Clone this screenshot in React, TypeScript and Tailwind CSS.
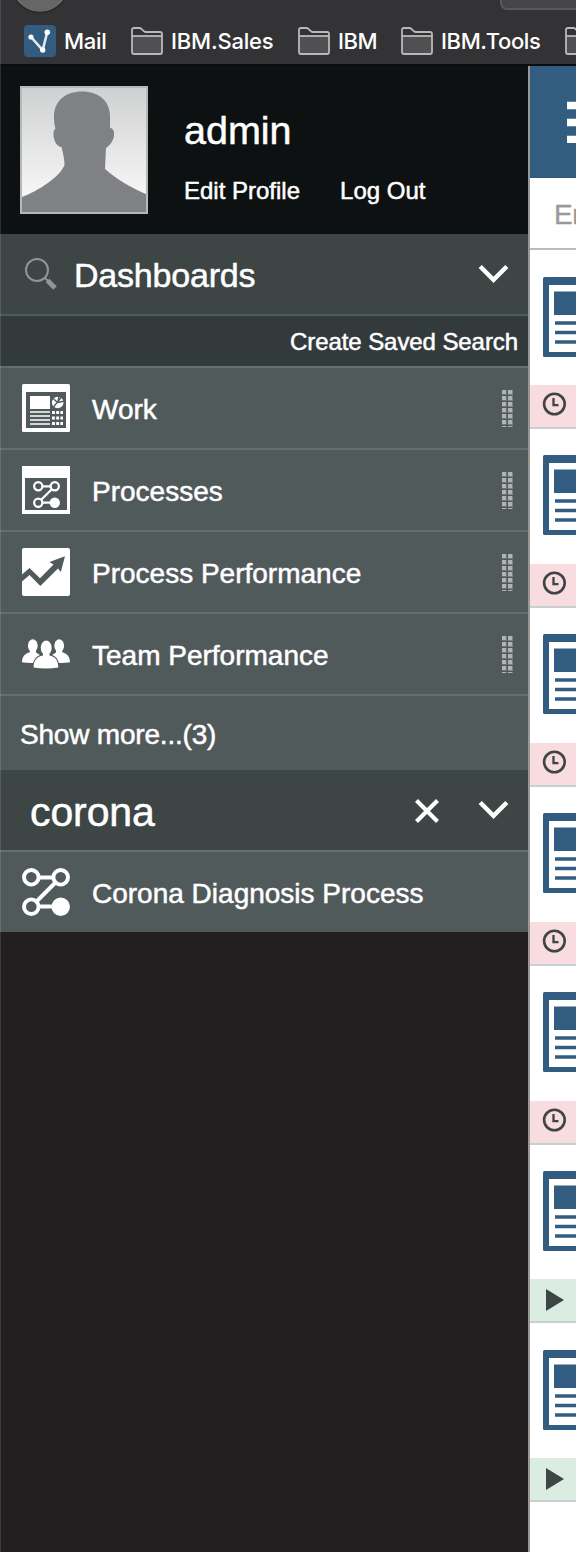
import type { ReactNode } from "react";

function Folder() {
  return (
    <svg className="h-[28px] w-[32px] shrink-0" viewBox="0 0 32 28" fill="none" stroke="#b9b9ba" strokeWidth="1.8">
      <path d="M1 9H31V25Q31 27 29 27H3Q1 27 1 25Z" fill="#505052" stroke="none" />
      <path d="M1 3Q1 1 3 1H8.5Q9.6 1 10.4 1.8L13 4.3Q13.8 5 15 5H29Q31 5 31 7V25Q31 27 29 27H3Q1 27 1 25Z" />
      <path d="M1 9H31" />
    </svg>
  );
}

function BrowserBar() {
  return (
    <header className="flex h-[66px] shrink-0 flex-col overflow-hidden border-b-2 border-[#0b0c0d] bg-[#333335] font-['Inter',sans-serif] text-[22px] font-medium text-white">
      <div className="flex h-[17px] shrink-0 items-end justify-between pl-[10px]">
        <svg className="h-[17px] w-[60px]" viewBox="0 0 60 17">
          <circle cx="30" cy="-17" r="29.5" fill="#666667" stroke="#272729" strokeWidth="1.5" />
        </svg>
        <div className="mb-[7px] h-[10px] w-[76px] rounded-bl-[7px] border-b-2 border-l-2 border-[#58585b] bg-[#454547]" />
      </div>
      <nav className="flex h-[47px] shrink-0 items-center pl-[24px] leading-[30px] whitespace-nowrap">
        <div className="flex w-[107px] shrink-0 items-center gap-[8px]">
          <svg className="h-[32px] w-[32px] shrink-0" viewBox="0 0 32 32">
            <rect width="32" height="32" rx="4" fill="#325c80" />
            <path d="M7 12L18.7 25L23.3 7" fill="none" stroke="#e3eaf0" strokeWidth="2.6" />
            <circle cx="7" cy="12" r="2.6" fill="#fff" />
            <circle cx="18.7" cy="25" r="2.7" fill="#fff" />
            <circle cx="23.3" cy="7.2" r="2.8" fill="#fff" />
          </svg>
          <span className="tracking-[-0.3px]">Mail</span>
        </div>
        <div className="flex w-[167px] shrink-0 items-center gap-[8px]">
          <Folder />
          <span className="tracking-[-0.2px]">IBM.Sales</span>
        </div>
        <div className="flex w-[103px] shrink-0 items-center gap-[8px]">
          <Folder />
          <span className="tracking-[-0.5px]">IBM</span>
        </div>
        <div className="flex w-[164px] shrink-0 items-center gap-[8px]">
          <Folder />
          <span className="tracking-[-0.4px]">IBM.Tools</span>
        </div>
        <Folder />
      </nav>
    </header>
  );
}

function Avatar() {
  return (
    <svg className="h-[128px] w-[128px] shrink-0" viewBox="0 0 128 128">
      <defs>
        <linearGradient id="sky" x1="0" y1="0" x2="0" y2="1">
          <stop offset="0" stopColor="#cfd0d1" />
          <stop offset="0.9" stopColor="#f8f8f8" />
        </linearGradient>
      </defs>
      <rect width="128" height="128" fill="#b7b8b8" />
      <rect x="2" y="2" width="124" height="124" fill="url(#sky)" />
      <path
        d="M2 111C18 105 40 91 44.500 79C44.500 73 43 67 41.500 61C37 61 33 54 33.500 47C33.700 44 34.500 43 35.500 43C34 38 34 33 34 29C35 14 46 5.500 62 5.500C79 5.500 89.500 15 90 29L90 42C93 42 94.500 45 94 50C93 56 88 61 86 62L85 83C97 94 116 104 126 108V126H2Z"
        fill="#808184"
      />
    </svg>
  );
}

function Chevron() {
  return (
    <svg className="h-[20px] w-[32px]" viewBox="0 0 32 20" fill="none" stroke="white" strokeWidth="4.500">
      <path d="M2.200 2.500L15.500 15.800L28.800 2.500" />
    </svg>
  );
}

function Grip() {
  return (
    <svg className="h-[37px] w-[12px] shrink-0" viewBox="0 0 12 37">
      {[0, 6, 12, 18, 24, 30, 36].map((y) => (
        <g key={y}>
          <rect y={y} width="5" height="5" fill="#6d7475" />
          <rect x="6" y={y} width="5" height="5" fill="#7d8384" />
          <rect y={y} width="4" height="4" fill="#b0b3b3" />
          <rect x="6" y={y} width="4" height="4" fill="#b0b3b3" />
        </g>
      ))}
    </svg>
  );
}

function WorkIcon() {
  return (
    <svg className="h-[48px] w-[48px] shrink-0" viewBox="0 0 48 48">
      <rect width="48" height="48" rx="1.500" fill="white" />
      <rect x="4" y="8" width="40" height="36" fill="#515a5b" />
      <rect x="8" y="12" width="20" height="13" fill="white" />
      <path d="M8 28H28M8 32H28M8 36H28M8 40H28" stroke="white" strokeWidth="1.700" />
      <path d="M30 28.500H41M30 34H41M30 39.500H41" stroke="white" strokeWidth="2.800" strokeDasharray="2.900 1.300" />
      <circle cx="35.700" cy="18.500" r="5.800" fill="white" />
      <path d="M35.700 18.500L37 12M35.700 18.500L31 14.500M35.700 18.500L42.500 17M39.500 13L31.500 23" stroke="#515a5b" strokeWidth="1.300" />
    </svg>
  );
}

function Nodes({ className }: { className: string }) {
  return (
    <svg className={className} viewBox="0 0 48 48" fill="none" stroke="white" strokeWidth="3.900">
      <path d="M17 9.500H31M33 15L15 33M17 38.500H31" />
      <circle cx="9.300" cy="9.300" r="7.300" />
      <circle cx="38.700" cy="9.300" r="7.300" />
      <circle cx="9.300" cy="38.700" r="7.300" />
      <circle cx="38.700" cy="38.700" r="7.300" fill="white" />
    </svg>
  );
}

function ProcessesIcon() {
  return (
    <div className="flex h-[48px] w-[48px] shrink-0 items-end justify-center border-x-[3px] border-t-[12px] border-b-[4px] border-white pb-[2px]">
      <Nodes className="h-[27px] w-[27px]" />
    </div>
  );
}

function TrendIcon() {
  return (
    <svg className="h-[48px] w-[48px] shrink-0" viewBox="0 0 48 48">
      <rect width="48" height="48" rx="2" fill="white" />
      <path d="M0 26.500L7.500 20L18 30.200L31.500 16.500L27.500 14L43 8.200L38.800 24L36 20.500L18.300 38L7.500 27L0 33.500Z" fill="#515a5b" />
    </svg>
  );
}

function TeamIcon() {
  return (
    <svg className="h-[48px] w-[48px] shrink-0" viewBox="0 0 48 48" fill="white">
      <ellipse cx="10.800" cy="15.700" rx="4.900" ry="6.400" />
      <path d="M8 19H14V22.500L18 25L12 33Q5 33.200 0 32.300C0 26.500 3 23.500 8 22Z" />
      <ellipse cx="37.200" cy="15.700" rx="4.900" ry="6.400" />
      <path d="M40 19H34V22.500L30 25L36 33Q43 33.200 48 32.300C48 26.500 45 23.500 40 22Z" />
      <g stroke="#515a5b" strokeWidth="2.400" paintOrder="stroke">
        <path d="M21 22H27.400V25.500C33 26.500 36.300 30 36.300 37.500Q24 39.300 11.600 37.500C11.600 30 15 26.500 21 25.500Z" />
        <ellipse cx="24.200" cy="17.800" rx="5.500" ry="7.200" />
      </g>
      <path d="M21 21H27.400V27H21Z" />
    </svg>
  );
}

function Row({ icon, label, grip = true }: { icon: ReactNode; label: string; grip?: boolean }) {
  return (
    <div className="flex h-[82px] shrink-0 items-center border-t-2 border-[#656e6f] bg-[#515a5b] pr-[14px] pl-[22px] text-[28px] text-white">
      {icon}
      <span className="ml-[22px] grow pt-[3px] whitespace-nowrap">{label}</span>
      {grip && <Grip />}
    </div>
  );
}

function Sidebar() {
  return (
    <aside className="flex w-[530px] shrink-0 flex-col border-r-2 border-[#999896] bg-[#231f20] text-white [-webkit-text-stroke:0.5px]">
      <section className="flex h-[168px] shrink-0 items-center bg-[#0d1112] pl-[20px]">
        <Avatar />
        <div className="ml-[36px] flex h-[128px] flex-col">
          <div className="pt-[22px] text-[39.500px] leading-[44px]">admin</div>
          <div className="mt-[25px] flex gap-[40px] text-[24px] leading-[28px]">
            <span>Edit Profile</span>
            <span>Log Out</span>
          </div>
        </div>
      </section>
      <section className="flex h-[82px] shrink-0 items-center border-b-2 border-[#515b5c] bg-[#3d4545] pr-[18px] pl-[24px]">
        <svg className="h-[34px] w-[34px] shrink-0" viewBox="0 0 34 34" fill="none" stroke="#929595">
          <circle cx="13" cy="13" r="11" strokeWidth="2" />
          <path d="M21 21L24 24" strokeWidth="2" />
          <path d="M23.500 23.500L31 31" strokeWidth="5" />
        </svg>
        <h2 className="ml-[16px] grow pt-[3px] text-[34px] tracking-[-0.200px]">Dashboards</h2>
        <Chevron />
      </section>
      <div className="flex h-[50px] shrink-0 items-center justify-end bg-[#333a3b] pt-[2px] pr-[10px] text-[24px] tracking-[-0.080px]">Create Saved Search</div>
      <Row icon={<WorkIcon />} label="Work" />
      <Row icon={<ProcessesIcon />} label="Processes" />
      <Row icon={<TrendIcon />} label="Process Performance" />
      <Row icon={<TeamIcon />} label="Team Performance" />
      <div className="flex h-[76px] shrink-0 items-center border-t-2 border-[#656e6f] bg-[#515a5b] pt-[3px] pl-[20px] text-[28px] tracking-[-0.200px]">Show more...(3)</div>
      <section className="flex h-[80px] shrink-0 items-center bg-[#3d4545] pr-[18px] pl-[30px]">
        <h2 className="grow pt-[3px] text-[41px] leading-[48px] tracking-[-0.100px]">corona</h2>
        <svg className="mt-[2px] mr-[39px] h-[24px] w-[24px]" viewBox="0 0 24 24" stroke="white" strokeWidth="4.200">
          <path d="M1.500 1.500L22.500 22.500M22.500 1.500L1.500 22.500" />
        </svg>
        <Chevron />
      </section>
      <Row icon={<Nodes className="h-[48px] w-[48px] shrink-0" />} label="Corona Diagnosis Process" grip={false} />
    </aside>
  );
}

function TaskIcon() {
  return (
    <svg className="ml-[13px] h-[80px] w-[33px] shrink-0" viewBox="0 0 33 80">
      <rect width="80" height="80" rx="1.500" fill="#325c80" />
      <rect x="6" y="8" width="68" height="67" fill="white" />
      <rect x="11" y="14.500" width="40" height="23.500" fill="#325c80" />
      <path d="M12 46H40M12 55.500H40M12 65H40" stroke="#325c80" strokeWidth="3.400" />
    </svg>
  );
}

const tasks = [
  { late: true, top: "h-[135px] pt-[27px]" },
  { late: true, top: "h-[135px] pt-[26px]" },
  { late: true, top: "h-[135px] pt-[26px]" },
  { late: true, top: "h-[135px] pt-[26px]" },
  { late: true, top: "h-[135px] pt-[26px]" },
  { late: false, top: "h-[134px] pt-[26px]" },
  { late: false, top: "h-[135px] pt-[27px]" },
];

function TaskList() {
  return (
    <main className="flex w-[46px] shrink-0 flex-col overflow-hidden bg-white">
      <div className="flex h-[112px] shrink-0 items-center justify-end bg-[#325c80]">
        <svg className="h-[42px] w-[9px]" viewBox="0 0 9 42">
          <path d="M0 4.500H9M0 21.500H9M0 38.500H9" stroke="white" strokeWidth="7.300" />
        </svg>
      </div>
      <div className="flex h-[72px] shrink-0 items-center overflow-hidden border-b-2 border-[#bbb] pt-[3px] pl-[24px] text-[28px] whitespace-nowrap text-[#999] tracking-[-0.500px] [-webkit-text-stroke:0.3px]">Enter</div>
      {tasks.map((task, index) => (
        <article key={index} className="shrink-0">
          <div className={task.top}>
            <TaskIcon />
          </div>
          {task.late ? (
            <div className="h-[44px] border-b-2 border-[#c7d1d1] bg-[#f8dce0] pt-[7px] pl-[12px]">
              <svg className="h-[24px] w-[24px]" viewBox="0 0 24 24" fill="none" stroke="#3d4545">
                <circle cx="12.400" cy="12" r="10.300" strokeWidth="2.600" />
                <path d="M11.500 6V13.200H16.500" strokeWidth="2.300" />
              </svg>
            </div>
          ) : (
            <div className="h-[44px] border-b-2 border-[#c7d1d1] bg-[#dbece3] pt-[10px] pl-[16px]">
              <svg className="h-[22px] w-[18px]" viewBox="0 0 18 22">
                <path d="M0 0L18 11L0 22Z" fill="#3d4545" />
              </svg>
            </div>
          )}
        </article>
      ))}
    </main>
  );
}

export default function App() {
  return (
    <div className="relative flex h-[1552px] w-[576px] flex-col overflow-hidden font-['Liberation_Sans',Arial,sans-serif]">
      <BrowserBar />
      <div className="flex grow">
        <Sidebar />
        <TaskList />
      </div>
      <div className="absolute inset-y-0 left-0 w-px bg-white/12" />
    </div>
  );
}
